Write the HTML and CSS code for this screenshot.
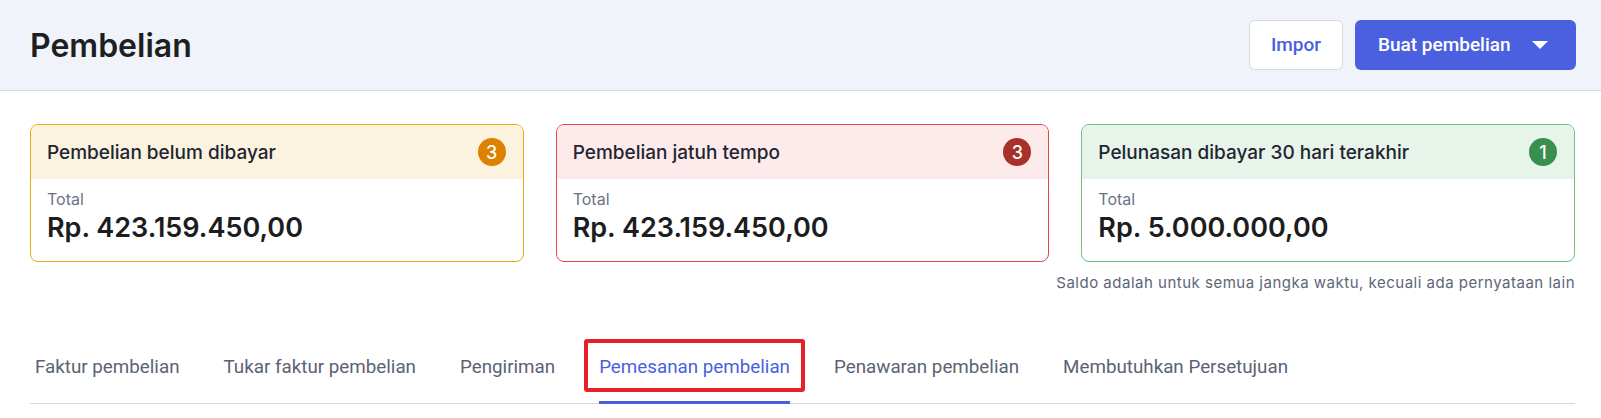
FILE: index.html
```html
<!DOCTYPE html>
<html lang="id">
<head>
<meta charset="utf-8">
<title>Pembelian</title>
<link rel="stylesheet" href="styles.css">
</head>
<body>
<header class="topbar">
  <h1 class="title">Pembelian</h1>
  <div class="actions">
    <button class="btn btn-outline">Impor</button>
    <button class="btn btn-primary">Buat pembelian
      <svg class="caret" width="16" height="8" viewBox="0 0 16 8"><path d="M0 0 L16 0 L8 8 Z" fill="#fff"/></svg>
    </button>
  </div>
</header>

<section class="summary">
  <div class="card card-yellow">
    <div class="card-head"><span>Pembelian belum dibayar</span><span class="badge">3</span></div>
    <div class="card-body"><div class="label">Total</div><div class="amount">Rp. 423.159.450,00</div></div>
  </div>
  <div class="card card-red">
    <div class="card-head"><span>Pembelian jatuh tempo</span><span class="badge">3</span></div>
    <div class="card-body"><div class="label">Total</div><div class="amount">Rp. 423.159.450,00</div></div>
  </div>
  <div class="card card-green">
    <div class="card-head"><span>Pelunasan dibayar 30 hari terakhir</span><span class="badge">1</span></div>
    <div class="card-body"><div class="label">Total</div><div class="amount">Rp. 5.000.000,00</div></div>
  </div>
</section>
<p class="note">Saldo adalah untuk semua jangka waktu, kecuali ada pernyataan lain</p>

<nav class="tabs">
  <a class="tab">Faktur pembelian</a>
  <a class="tab">Tukar faktur pembelian</a>
  <a class="tab">Pengiriman</a>
  <a class="tab active">Pemesanan pembelian<span class="highlight"></span></a>
  <a class="tab">Penawaran pembelian</a>
  <a class="tab">Membutuhkan Persetujuan</a>
</nav>
</body>
</html>
```

FILE: styles.css
```css
* { box-sizing: border-box; }
body {
  margin: 0;
  background: #ffffff;
  font-family: Inter, "Noto Sans", sans-serif;
  color: #1f2330;
}
.topbar {
  height: 91px;
  background: #f0f3f9;
  border-bottom: 1px solid #d4d9e1;
  display: flex;
  align-items: center;
  justify-content: space-between;
  padding: 0 25px 0 30px;
}
.title {
  margin: 0;
  font-size: 32px;
  font-weight: 600;
  color: #1e1f22;
}
.actions { display: flex; gap: 12px; margin-top: -1px; }
.btn {
  height: 50px;
  border-radius: 6px;
  font-family: Roboto, "Liberation Sans", sans-serif;
  font-size: 19px;
  font-weight: 500;
  display: flex;
  align-items: center;
  justify-content: center;
  cursor: pointer;
}
.btn-outline {
  width: 94px;
  background: #ffffff;
  border: 1px solid #d3d8e1;
  color: #4a5fdc;
}
.btn-primary {
  width: 221px;
  background: #4b60de;
  border: none;
  color: #ffffff;
  justify-content: flex-start;
  padding-left: 23px;
  gap: 21px;
}
.caret { display: block; margin-top: 1px; }

.summary {
  display: grid;
  grid-template-columns: repeat(3, 1fr);
  gap: 32px;
  padding: 33px 26px 0 30px;
}
.card {
  border: 1px solid;
  border-radius: 8px;
  overflow: hidden;
}
.card-head {
  height: 54px;
  display: flex;
  align-items: center;
  justify-content: space-between;
  padding: 0 17px 0 16px;
  font-size: 19px;
  font-weight: 500;
  color: #1f2532;
}
.badge {
  width: 28px;
  height: 28px;
  border-radius: 50%;
  color: #fff;
  font-size: 18px;
  font-weight: 500;
  display: flex;
  align-items: center;
  justify-content: center;
}
.card-body { padding: 10px 16px 17px; }
.label {
  font-size: 16px;
  line-height: 20px;
  color: #6b7385;
}
.amount {
  margin-top: 3px;
  font-size: 27px;
  line-height: 32px;
  font-weight: 600;
  color: #1c1d20;
}
.card-yellow { border-color: #e5ad12; }
.card-yellow .card-head { background: #fbf2df; }
.card-yellow .badge { background: #dd8200; }
.card-red { border-color: #e2474c; }
.card-red .card-head { background: #fdebec; }
.card-red .badge { background: #a8312a; }
.card-green { border-color: #6cc17c; }
.card-green .card-head { background: #e7f4e9; }
.card-green .badge { background: #3a8f50; }

.note {
  margin: 11px 26px 0 30px;
  text-align: right;
  font-size: 15px;
  line-height: 20px;
  color: #5c6677;
  letter-spacing: 0.5px;
}

.tabs {
  display: flex;
  gap: 44px;
  margin: 50px 26px 0 30px;
  padding-left: 5px;
  border-bottom: 1px solid #d3d8e0;
}
.tab {
  position: relative;
  padding: 12px 0 22px;
  line-height: 24px;
  font-family: Roboto, "Liberation Sans", sans-serif;
  font-size: 18.8px;
  color: #5a6373;
  border-bottom: 3px solid transparent;
  margin-bottom: -1px;
}
.tab.active {
  color: #4b5fdc;
  border-bottom-color: #4b5fdc;
}
.highlight {
  position: absolute;
  left: -15px;
  right: -15px;
  top: -4px;
  height: 53px;
  border: 4px solid #e8202a;
  border-radius: 3px;
}
```
